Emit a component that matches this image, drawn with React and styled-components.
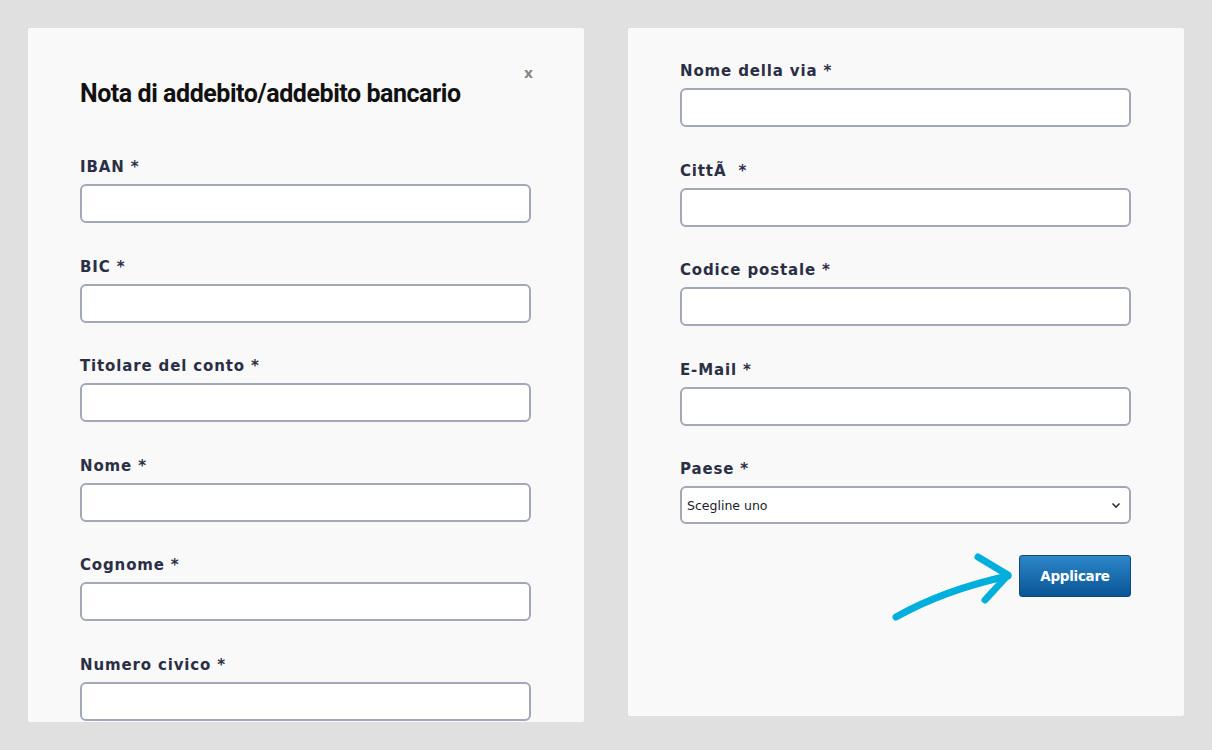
import React from 'react';
import styled, {createGlobalStyle} from 'styled-components';

const GlobalStyle = createGlobalStyle`
  html, body {
    margin: 0;
    padding: 0;
    background: #e0e0e0;
    height: 100%;
    overflow: hidden;
  }
  * {
    box-sizing: border-box;
  }
`;

const Page = styled.div`
  display: flex;
  align-items: flex-start;
  gap: 44px;
  padding: 28px 0 0 28px;
  width: 1212px;
  height: 750px;
`;

const Panel = styled.div`
  position: relative;
  width: 556px;
  height: ${props => props.height}px;
  padding: ${props => props.padTop}px 53px 0 52px;
  background: #f9f9f9;
  border-radius: 2px;
  overflow: hidden;
`;

const Close = styled.button`
  position: absolute;
  top: 35px;
  right: 51px;
  padding: 0;
  border: none;
  background: none;
  color: #858585;
  font-family: "DejaVu Sans", sans-serif;
  font-size: 14px;
  font-weight: bold;
  line-height: 20px;
  cursor: pointer;
`;

const Title = styled.h2`
  margin: 0 0 49px;
  padding-top: 1px;
  font-family: "Roboto", sans-serif;
  font-size: 25px;
  font-weight: 700;
  line-height: 27px;
  letter-spacing: -0.45px;
  color: #111;
`;

const Field = styled.div`
  display: flex;
  flex-direction: column;
  gap: 7px;
  margin-bottom: 32.5px;
`;

const Label = styled.label`
  padding-top: 1px;
  font-family: "DejaVu Sans", Verdana, sans-serif;
  font-size: 15px;
  font-weight: bold;
  line-height: 20px;
  letter-spacing: 0.85px;
  white-space: pre;
  color: #2b2f45;
`;

const Input = styled.input`
  width: 100%;
  height: 39px;
  padding: 0 8px;
  background: #fff;
  border: 2px solid #a3a8b8;
  border-radius: 6px;
  outline: none;
`;

const SelectWrap = styled.div`
  position: relative;
  width: 100%;
  height: 38px;
  display: flex;
  align-items: center;
  padding: 0 5px;
  background: #fff;
  border: 2px solid #a3a8b8;
  border-radius: 6px;
  font-family: "DejaVu Sans", Verdana, sans-serif;
  font-size: 12.5px;
  color: #1c1c2a;
`;

const Chevron = styled.svg`
  margin-left: auto;
  margin-right: 3px;
`;

const Actions = styled.div`
  display: flex;
  justify-content: flex-end;
  margin-top: -1.5px;
`;

const ButtonWrap = styled.div`
  position: relative;
`;

const ApplyButton = styled.button`
  width: 112px;
  height: 42px;
  padding: 0;
  border: 1px solid #0b4a82;
  border-radius: 3px;
  background: linear-gradient(#2c86c9, #0a5596);
  color: #fff;
  font-family: "DejaVu Sans", Verdana, sans-serif;
  font-size: 13.5px;
  font-weight: bold;
  letter-spacing: -0.3px;
  cursor: pointer;
`;

const Arrow = styled.svg`
  position: absolute;
  left: -127px;
  top: -3px;
`;

const leftFields = ['IBAN *', 'BIC *', 'Titolare del conto *', 'Nome *', 'Cognome *', 'Numero civico *'];
const rightFields = ['Nome della via *', 'CittÃ  *', 'Codice postale *', 'E-Mail *'];

const App = () => {
  return (
    <>
      <GlobalStyle />
      <Page>
        <Panel height={694} padTop={51}>
          <Close>x</Close>
          <Title>Nota di addebito/addebito bancario</Title>
          {leftFields.map(label => (
            <Field key={label}>
              <Label>{label}</Label>
              <Input />
            </Field>
          ))}
        </Panel>
        <Panel height={688} padTop={32}>
          {rightFields.map(label => (
            <Field key={label}>
              <Label>{label}</Label>
              <Input />
            </Field>
          ))}
          <Field>
            <Label>Paese *</Label>
            <SelectWrap>
              Scegline uno
              <Chevron width="10" height="7" viewBox="0 0 10 7">
                <path d="M1.5 1.5 L5 5 L8.5 1.5" fill="none" stroke="#333" strokeWidth="1.6" />
              </Chevron>
            </SelectWrap>
          </Field>
          <Actions>
            <ButtonWrap>
              <Arrow width="124" height="72" viewBox="0 0 124 72">
                <path d="M4 65 Q52 38 116 24" fill="none" stroke="#00afdc" strokeWidth="7" strokeLinecap="round" />
                <path d="M86 5 L116 23 L93 48" fill="none" stroke="#00afdc" strokeWidth="7" strokeLinecap="round" strokeLinejoin="round" />
              </Arrow>
              <ApplyButton>Applicare</ApplyButton>
            </ButtonWrap>
          </Actions>
        </Panel>
      </Page>
    </>
  );
};

export default App;
